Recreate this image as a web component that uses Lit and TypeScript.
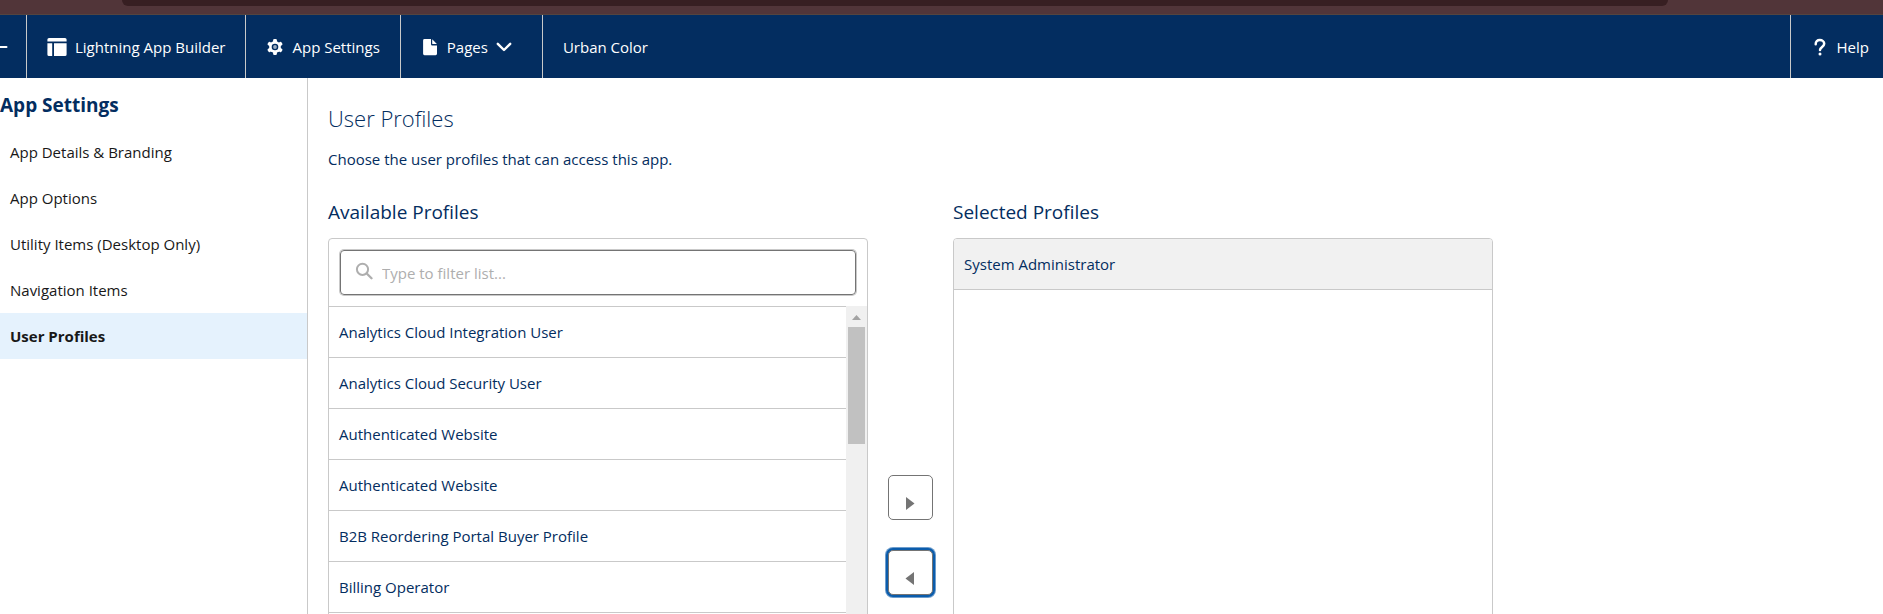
import { LitElement, html, css, svg } from "lit";
import { customElement, property, state } from "lit/decorators.js";
import { classMap } from "lit/directives/class-map.js";

const icons = {
  layout: svg`<svg width="20" height="20" viewBox="0 0 20 20" fill="#fff" aria-hidden="true">
    <path d="M2 1h16a1.6 1.6 0 0 1 1.6 1.6V4.500H.4V2.600A1.600 1.600 0 0 1 2 1z"/>
    <path d="M.4 6.200h4.800V19H2a1.600 1.600 0 0 1-1.600-1.600zM7 6.200h12.600v11.200A1.600 1.600 0 0 1 18 19H7z"/></svg>`,
  gear: svg`<svg width="18" height="18" viewBox="0 0 18 18" aria-hidden="true">
    <g fill="#fff"><circle cx="9" cy="9" r="5.900"/>
    <rect x="7.100" y="1" width="3.800" height="16" rx="1.200"/>
    <rect x="7.100" y="1" width="3.800" height="16" rx="1.200" transform="rotate(60 9 9)"/>
    <rect x="7.100" y="1" width="3.800" height="16" rx="1.200" transform="rotate(120 9 9)"/></g>
    <circle cx="9" cy="9" r="3.300" fill="#032d60"/><circle cx="9" cy="9" r="1.900" fill="#fff" fill-opacity=".6"/></svg>`,
  page: svg`<svg width="18" height="18" viewBox="0 0 18 18" fill="#fff" aria-hidden="true">
    <path d="M3.500 1H10v5.200A1.300 1.300 0 0 0 11.300 7.500H16v8.300A1.400 1.400 0 0 1 14.600 17.200H3.500A1.400 1.400 0 0 1 2.100 15.800V2.400A1.400 1.400 0 0 1 3.500 1z"/>
    <path d="M11.200 1.200 15.900 6.100h-4.200a.5.5 0 0 1-.5-.5z"/></svg>`,
  chevron: svg`<svg width="16" height="16" viewBox="0 0 16 16" fill="none" stroke="#fff" stroke-width="2.400" stroke-linecap="round" stroke-linejoin="round" aria-hidden="true">
    <path d="M1.800 4.800 8 11l6.200-6.200"/></svg>`,
  help: svg`<svg width="18" height="18" viewBox="0 0 18 18" aria-hidden="true">
    <path d="M4.700 6.200C4.700 3.600 6.300 2.100 8.800 2.100s4.400 1.500 4.400 3.700c0 3-4.200 3.200-4.200 6.200" fill="none" stroke="#fff" stroke-width="2.500" stroke-linecap="round"/>
    <circle cx="9" cy="15.900" r="1.500" fill="#fff"/></svg>`,
  back: svg`<svg width="8" height="18" viewBox="0 0 8 18" aria-hidden="true"><path d="M0 9h6.500" stroke="#fff" stroke-width="2" stroke-linecap="round"/></svg>`,
  search: svg`<svg width="18" height="18" viewBox="0 0 18 18" fill="none" stroke="#aeaeae" stroke-width="2" stroke-linecap="round" aria-hidden="true">
    <circle cx="7.500" cy="7.300" r="5.600"/><path d="m11.700 11.500 4.800 4.800" stroke-width="2.300"/></svg>`,
  right: svg`<svg width="24" height="24" viewBox="0 0 24 24" fill="#747474" aria-hidden="true"><path d="M7 11v13l8.500-6.500z"/></svg>`,
  left: svg`<svg width="24" height="24" viewBox="0 0 24 24" fill="#747474" aria-hidden="true"><path d="M15 11v13l-8.500-6.500z"/></svg>`,
};

@customElement("builder-header")
class BuilderHeader extends LitElement {
  static styles = css`
    :host { display: block; background: #032d60; color: #fff; }
    .bar { display: flex; align-items: stretch; height: 63px; }
    .cell {
      display: flex; align-items: center; gap: 8px; box-sizing: border-box;
      padding: 0 20px; border: 0; border-right: 1px solid #c9c9c9;
      background: none; color: inherit; font: inherit; text-decoration: none; white-space: nowrap;
    }
    .cell svg { flex: none; }
    .back { width: 27px; padding: 0; }
    .menu { padding-right: 30px; cursor: pointer; }
    .name { border-right: 0; flex: 1; font-weight: 400; margin: 0; }
    .help { border-right: 0; border-left: 1px solid #c9c9c9; padding-right: 14px; }
  `;
  render() {
    return html`<nav class="bar" aria-label="Builder">
      <a class="cell back" href="#back" aria-label="Back">${icons.back}</a>
      <a class="cell" href="#builder">${icons.layout}Lightning App Builder</a>
      <a class="cell" href="#settings">${icons.gear}App Settings</a>
      <button class="cell menu" type="button" aria-haspopup="menu">${icons.page}Pages${icons.chevron}</button>
      <span class="cell name">Urban Color</span>
      <a class="cell help" href="#help">${icons.help}Help</a>
    </nav>`;
  }
}

@customElement("settings-nav")
class SettingsNav extends LitElement {
  @property() current = "";
  static styles = css`
    :host { display: block; flex: none; width: 307px; border-right: 1px solid #c9c9c9; padding-top: 14px; }
    .title { margin: 0 0 11px; font-size: 19px; line-height: 26px; font-weight: 700; color: #032d60; }
    .list { list-style: none; margin: 0; padding: 0; }
    .link { display: block; padding: 11px 10px; line-height: 24px; color: #181818; text-decoration: none; }
    .active { background: #e5f2fd; font-weight: 700; }
  `;
  private items = ["App Details & Branding", "App Options", "Utility Items (Desktop Only)", "Navigation Items", "User Profiles"];
  render() {
    return html`<h2 class="title">App Settings</h2>
      <ul class="list">
        ${this.items.map((i) => html`<li><a href="#" class=${classMap({ link: true, active: i === this.current })}>${i}</a></li>`)}
      </ul>`;
  }
}

@customElement("profile-picker")
class ProfilePicker extends LitElement {
  @state() private filter = "";
  private available = [
    "Analytics Cloud Integration User",
    "Analytics Cloud Security User",
    "Authenticated Website",
    "Authenticated Website",
    "B2B Reordering Portal Buyer Profile",
    "Billing Operator",
  ];
  private selected = ["System Administrator"];
  static styles = css`
    :host { display: flex; gap: 20px; align-items: flex-start; }
    .column { flex: 1 1 0; min-width: 0; max-width: 540px; }
    .label { margin: 0 0 13px; font-size: 19px; line-height: 26px; font-weight: 400; color: #032d60; }
    .panel {
      box-sizing: border-box; height: 594px; display: flex; flex-direction: column;
      border: 1px solid #c9c9c9; border-radius: 4px; overflow: hidden; background: #fff;
    }
    .search { padding: 11px; }
    .field {
      display: flex; align-items: center; gap: 9px; box-sizing: border-box; height: 45px; padding: 0 14px;
      border: 1px solid #747474; border-radius: 4px; box-shadow: 0 0 0 1px #c9c9c9;
    }
    .field svg { flex: none; margin-bottom: 4px; }
    .input { flex: 1; min-width: 0; border: 0; outline: 0; padding: 0; background: none; font: inherit; color: #181818; }
    .input::placeholder { color: #aeaeae; opacity: 1; }
    .scroller { flex: 1; min-height: 0; display: flex; }
    .list { flex: 1; list-style: none; margin: 0; padding: 0; overflow: hidden; }
    .row { padding: 13px 10px; line-height: 24px; border-top: 1px solid #c9c9c9; }
    .row:last-child { border-bottom: 1px solid #c9c9c9; }
    .flush .row { border-top: 0; background: #f1f1f1; }
    .track { width: 21px; background: #f0f0f0; display: flex; flex-direction: column; align-items: center; }
    .up { display: block; height: 21px; }
    .thumb { width: 17px; height: 117px; background: #c1c1c1; }
    .moves { display: flex; flex-direction: column; justify-content: center; gap: 30px; height: 594px; margin-top: 39px; }
    .move {
      display: grid; place-items: center; box-sizing: border-box; width: 45px; height: 45px; padding: 0;
      border: 1px solid #747474; border-radius: 5px; background: #fff; cursor: pointer;
    }
    .focused { box-shadow: 0 0 0 2px #0b5cab, 0 0 0 3px #6d9dcd; }
  `;
  render() {
    const shown = this.available.filter((p) => p.toLowerCase().includes(this.filter.toLowerCase()));
    return html`
      <section class="column">
        <h2 class="label" id="available">Available Profiles</h2>
        <div class="panel">
          <div class="search">
            <label class="field">${icons.search}
              <input class="input" type="text" aria-label="Filter available profiles" placeholder="Type to filter list..."
                @input=${(e: Event) => (this.filter = (e.target as HTMLInputElement).value)} />
            </label>
          </div>
          <div class="scroller">
            <ul class="list" role="listbox" aria-labelledby="available">
              ${shown.map((p) => html`<li class="row" role="option">${p}</li>`)}
            </ul>
            <div class="track" aria-hidden="true">
              <svg class="up" width="21" height="21" viewBox="0 0 21 21" fill="#a3a3a3"><path d="M6 14h9l-4.500-5z"/></svg>
              <div class="thumb"></div>
            </div>
          </div>
        </div>
      </section>
      <div class="moves">
        <button class="move" type="button" aria-label="Add profile">${icons.right}</button>
        <button class="move focused" type="button" aria-label="Remove profile">${icons.left}</button>
      </div>
      <section class="column">
        <h2 class="label" id="selected">Selected Profiles</h2>
        <div class="panel flush">
          <ul class="list" role="listbox" aria-labelledby="selected">
            ${this.selected.map((p) => html`<li class="row" role="option">${p}</li>`)}
          </ul>
        </div>
      </section>`;
  }
}

@customElement("app-root")
class AppRoot extends LitElement {
  static styles = css`
    :host {
      display: flex; flex-direction: column; height: 100vh; overflow: hidden; background: #fff;
      font-family: "Open Sans", "Noto Sans", sans-serif; font-size: 15px; line-height: 24px; color: #032d60;
    }
    .frame { flex: none; height: 14px; background: #513539; border-bottom: 1px solid #54443f; }
    .pill { height: 6px; margin: 0 215px 0 122px; background: #371f22; border-radius: 0 0 16px 16px; }
    .body { flex: 1; min-height: 0; display: flex; overflow: hidden; }
    .main { flex: 1; min-width: 0; padding: 25px 20px; }
    .title { margin: 0 0 14px; font-size: 22px; line-height: 30px; font-weight: 300; }
    .intro { margin: 0 0 28px; }
  `;
  render() {
    return html`
      <div class="frame"><div class="pill"></div></div>
      <builder-header></builder-header>
      <div class="body">
        <settings-nav current="User Profiles"></settings-nav>
        <main class="main">
          <h1 class="title">User Profiles</h1>
          <p class="intro">Choose the user profiles that can access this app.</p>
          <profile-picker></profile-picker>
        </main>
      </div>`;
  }
}
